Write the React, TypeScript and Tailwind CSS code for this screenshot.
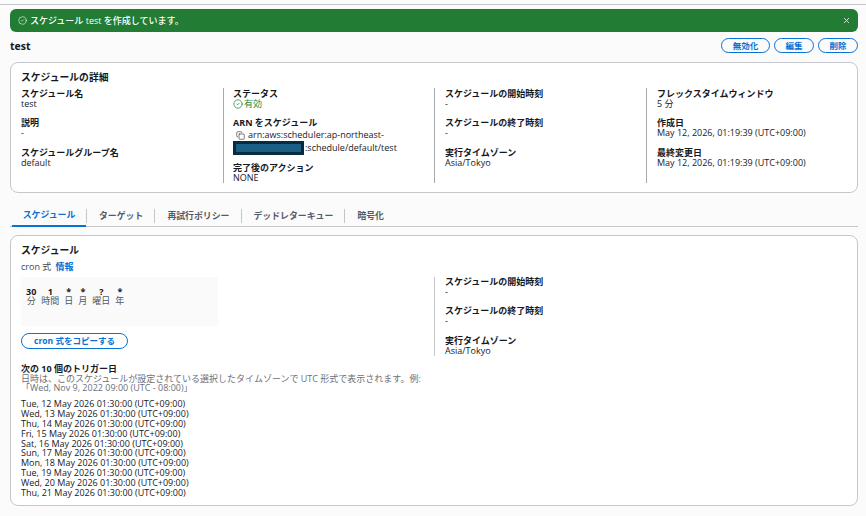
import { CircleCheck, Copy, X } from "lucide-react";

const font = { fontFamily: '"Open Sans", "Noto Sans CJK JP", sans-serif' };

const triggers = [
  "Tue, 12 May 2026 01:30:00 (UTC+09:00)",
  "Wed, 13 May 2026 01:30:00 (UTC+09:00)",
  "Thu, 14 May 2026 01:30:00 (UTC+09:00)",
  "Fri, 15 May 2026 01:30:00 (UTC+09:00)",
  "Sat, 16 May 2026 01:30:00 (UTC+09:00)",
  "Sun, 17 May 2026 01:30:00 (UTC+09:00)",
  "Mon, 18 May 2026 01:30:00 (UTC+09:00)",
  "Tue, 19 May 2026 01:30:00 (UTC+09:00)",
  "Wed, 20 May 2026 01:30:00 (UTC+09:00)",
  "Thu, 21 May 2026 01:30:00 (UTC+09:00)",
];

const cron = [
  ["30", "分"],
  ["1", "時間"],
  ["*", "日"],
  ["*", "月"],
  ["?", "曜日"],
  ["*", "年"],
];

const tabs = ["ターゲット", "再試行ポリシー", "デッドレターキュー", "暗号化"];

function Field({ label, value }: { label: string; value: string }) {
  return (
    <div className="mb-[9.3px]">
      <div className="font-bold text-[#16191f] h-[10px] leading-[10px]">{label}</div>
      <div className="h-[10px] leading-[10px] text-[#16191f]">{value}</div>
    </div>
  );
}

function HeaderButton({ label, w }: { label: string; w: string }) {
  return (
    <button className={`${w} h-[15px] rounded-full border border-[#0972d3] text-[#0972d3] font-bold text-[8.5px] leading-[13px] text-center`}>
      {label}
    </button>
  );
}

export default function App() {
  return (
    <div style={font} className="w-[866px] h-[516px] overflow-hidden bg-[#fbfbfc] text-[9px] text-[#16191f]">
      <div className="h-[5px] border-b border-[#c6c6cd]" />

      <div className="mx-[10px] mt-[4px] w-[848px]">
        {/* flash */}
        <div className="h-[23px] rounded-[6px] bg-[#227c33] text-white flex items-center px-[8px]">
          <CircleCheck size={9} strokeWidth={1.6} />
          <span className="ml-[3px] text-[9px] font-medium">スケジュール test を作成しています。</span>
          <X size={9} strokeWidth={2} className="ml-auto mr-[-1px]" />
        </div>

        {/* title row */}
        <div className="flex items-center justify-between mt-[6px] h-[15px]">
          <div className="font-bold text-[10.5px] text-[#16191f] pt-[3px]">test</div>
          <div className="flex gap-[4px]">
            <HeaderButton label="無効化" w="w-[49px]" />
            <HeaderButton label="編集" w="w-[40px]" />
            <HeaderButton label="削除" w="w-[40px]" />
          </div>
        </div>

        {/* details */}
        <div className="mt-[9px] h-[131px] rounded-[8px] border border-[#c6c6cd] bg-white px-[10px] pt-[9px]">
          <h2 className="font-bold text-[9.8px] leading-[12px]">スケジュールの詳細</h2>
          <div className="mt-[4px] flex">
            <div className="w-[202px] h-[95px] pt-[1px]">
              <Field label="スケジュール名" value="test" />
              <Field label="説明" value="-" />
              <Field label="スケジュールグループ名" value="default" />
            </div>
            <div className="w-[211px] h-[95px] border-l border-[#a9a9b0] pl-[9px] pt-[1px]">
              <div className="mb-[9.3px]">
                <div className="font-bold h-[10px] leading-[10px]">ステータス</div>
                <div className="h-[10px] leading-[10px] text-[#1f8a3c] flex items-center gap-[1px]">
                  <CircleCheck size={10} strokeWidth={1.8} />
                  <span>有効</span>
                </div>
              </div>
              <div className="font-bold h-[10px] leading-[10px]">ARN をスケジュール</div>
              <div className="h-[12px] leading-[12px] mt-[1px] flex items-center pl-[3px]">
                <Copy size={9} strokeWidth={1.5} className="mr-[3px]" />
                <span>arn:aws:scheduler:ap-northeast-</span>
              </div>
              <div className="h-[14px] leading-[14px] flex items-center">
                <span className="inline-block w-[71px] h-[14px] bg-[#1a5f85] border-[3px] border-[#0c2a3f]" />
                <span className="ml-[1px]">:schedule/default/test</span>
              </div>
              <div className="font-bold h-[10px] leading-[10px] mt-[8px]">完了後のアクション</div>
              <div className="h-[10px] leading-[10px]">NONE</div>
            </div>
            <div className="w-[212px] h-[95px] border-l border-[#a9a9b0] pl-[10px] pt-[1px]">
              <Field label="スケジュールの開始時刻" value="-" />
              <Field label="スケジュールの終了時刻" value="-" />
              <Field label="実行タイムゾーン" value="Asia/Tokyo" />
            </div>
            <div className="h-[95px] border-l border-[#a9a9b0] pl-[10px] pt-[1px] flex-1">
              <Field label="フレックスタイムウィンドウ" value="5 分" />
              <Field label="作成日" value="May 12, 2026, 01:19:39 (UTC+09:00)" />
              <Field label="最終変更日" value="May 12, 2026, 01:19:39 (UTC+09:00)" />
            </div>
          </div>
        </div>

        {/* tabs */}
        <div className="mt-[12px] h-[22px] border-b border-[#c6c6cd] flex items-center font-bold text-[8.9px] text-[#545b64]">
          <div className="w-[74px] h-full ml-[2px] flex items-center justify-center text-[#0972d3] border-b-2 border-[#0972d3] box-content">
            スケジュール
          </div>
          {tabs.map((t) => (
            <div key={t} className="h-[14px] border-l border-[#c6c6cd] pl-[12px] pr-[11px] flex items-center">
              {t}
            </div>
          ))}
        </div>

        {/* schedule card */}
        <div className="mt-[8px] h-[271px] rounded-[8px] border border-[#c6c6cd] bg-white pl-[10px] pr-[10px] pt-[9px]">
          <h2 className="font-bold text-[9.8px] leading-[12px]">スケジュール</h2>
          <div className="mt-[4px] h-[12px] leading-[12px] text-[#414750]">
            cron 式 <a className="ml-[2px] font-bold text-[#0972d3]">情報</a>
          </div>

          <div className="flex mt-[4px]">
            <div className="w-[413px]">
              <div className="w-[197px] h-[49px] bg-[#fafafa] px-[5px] pt-[10px] flex gap-[5px] leading-[9px]">
                {cron.map(([v, l], i) => (
                  <div key={i} className="text-center">
                    <div className="font-bold">{v}</div>
                    <div className="text-[#545b64]">{l}</div>
                  </div>
                ))}
              </div>
              <button className="block mt-[7px] w-[107px] h-[16px] rounded-full border border-[#0972d3] text-[#0972d3] font-bold text-[8.5px] leading-[14px] text-center">
                cron 式をコピーする
              </button>
            </div>
            <div className="pl-[10px] border-l border-[#c6c6cd] h-[79px] self-start">
              <Field label="スケジュールの開始時刻" value="-" />
              <Field label="スケジュールの終了時刻" value="-" />
              <Field label="実行タイムゾーン" value="Asia/Tokyo" />
            </div>
          </div>

          <div className="mt-[8px] font-bold h-[11px] leading-[10px]">次の 10 個のトリガー日</div>
          <div className="text-[#6b7078] leading-[8.5px] w-[410px]">
            日時は、このスケジュールが設定されている選択したタイムゾーンで UTC 形式で表示されます。例:
            <br />
            「Wed, Nov 9, 2022 09:00 (UTC - 08:00)」
          </div>
          <div className="mt-[7px]">
            {triggers.map((t) => (
              <div key={t} className="h-[9.9px] leading-[9.9px]">
                {t}
              </div>
            ))}
          </div>
        </div>
      </div>
    </div>
  );
}
